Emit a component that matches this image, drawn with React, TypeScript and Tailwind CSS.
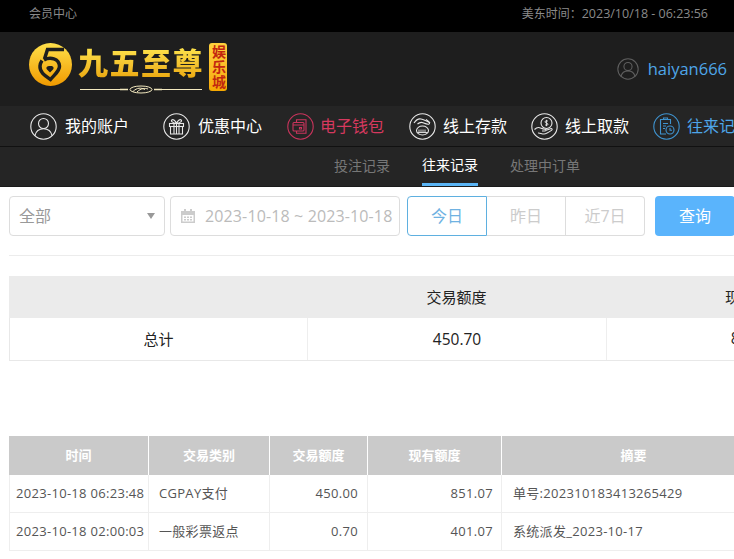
import type { ReactNode } from 'react';

const font = { fontFamily: '"Open Sans", "Noto Sans CJK SC", sans-serif' };

const Ring = ({ children, className }: { children: ReactNode; className: string }) => (
  <svg viewBox="0 0 27 27" fill="none" stroke="currentColor" strokeWidth="1.1" className={className}>
    <circle cx="13.5" cy="13.5" r="12.7" />
    {children}
  </svg>
);

const icons = {
  user: (
    <>
      <circle cx="13.5" cy="10.5" r="5" />
      <path d="M4.8 22.8c1.2-4.9 4.6-7 8.7-7s7.500 2.100 8.700 7" />
    </>
  ),
  gift: (
    <>
      <rect x="6.500" y="10.500" width="14" height="3" />
      <path d="M7.500 13.500V21h12v-7.500M11 10.500V21M13.500 10.500V21M16 10.500V21" />
      <path d="M13.500 10.500c-1-3-3.500-4.500-4.700-3.500s.7 3 4.700 3.500c1-3 3.500-4.500 4.700-3.500s-.7 3-4.700 3.500" />
    </>
  ),
  wallet: (
    <>
      <path d="M9.500 9V6.800h9.500v13.400H9.500V18" />
      <rect x="6" y="9.500" width="11" height="8.500" rx="1" />
      <path d="M6 12h11M12.500 14.500h2v1.500h-2z" />
    </>
  ),
  deposit: (
    <>
      <path d="M5 10c2-3 4.500-4.500 7-4 2 .4 5 2 7.500 3 1 .4 1.500 1.500.5 2-1.500.7-4-.5-6-1.300-2-.8-4 0-5.500 1.300" />
      <path d="M17 6.500c1.500 1 3 2 4 3.500" />
      <ellipse cx="13.500" cy="17.500" rx="6" ry="4.500" />
      <path d="M10 19.500v-3M12 19.500v-3M14 19.500v-3M16 19.500v-3M8.500 19.500h10" strokeWidth="0.9" />
    </>
  ),
  withdraw: (
    <>
      <circle cx="15.500" cy="10" r="5.500" />
      <path d="M15.500 6.800v6.400M17 8.300c-.7-.8-3-.8-3 .6 0 1.500 3 .8 3 2.300 0 1.300-2.300 1.300-3 .5" strokeWidth="0.9" />
      <path d="M3.500 16.500c2-2 4-2.500 6-1.500 1.500.7 3 1.200 4.500 1.200 1.500 0 1.500 1.800 0 1.800h-3M14.500 17.500l5-1.800c1.500-.5 2.300.8 1 1.700-2.500 1.800-5 3.600-7.500 3.600-2.500 0-4-1.200-6-1" />
    </>
  ),
  record: (
    <>
      <path d="M17.500 11V6.500H7.500v14.500h5.500" />
      <path d="M10.500 6.500V5h4v1.500M10 10.500h5M10 13h3M10 15.500h2" />
      <circle cx="17" cy="17" r="4" />
      <path d="M17 15v2.300h2" />
    </>
  ),
};

const navItems = [
  { label: '我的账户', icon: icons.user, text: 'text-white', ring: 'text-[#e8e8e8]', box: 'gap-[8px] mr-[34px]' },
  { label: '优惠中心', icon: icons.gift, text: 'text-white', ring: 'text-[#e8e8e8]', box: 'gap-[8px] mr-[25px]' },
  { label: '电子钱包', icon: icons.wallet, text: 'text-[#d6395f]', ring: 'text-[#c9345c]', box: 'gap-[6px] mr-[25px]' },
  { label: '线上存款', icon: icons.deposit, text: 'text-white', ring: 'text-[#e8e8e8]', box: 'gap-[7px] mr-[24px]' },
  { label: '线上取款', icon: icons.withdraw, text: 'text-white', ring: 'text-[#e8e8e8]', box: 'gap-[7px] mr-[24px]' },
  { label: '往来记录', icon: icons.record, text: 'text-[#4ea6e8]', ring: 'text-[#3f93cf]', box: 'gap-[7px]' },
];

const rows = [
  ['2023-10-18 06:23:48', 'CGPAY支付', '450.00', '851.07', '单号:202310183413265429'],
  ['2023-10-18 02:00:03', '一般彩票返点', '0.70', '401.07', '系统派发_2023-10-17'],
];

const Logo = () => (
  <div className="flex items-start">
    <svg viewBox="0 0 43 43" className="w-[43px] h-[43px] shrink-0">
      <defs>
        <linearGradient id="coin" x1="0" y1="0" x2="0" y2="1">
          <stop offset="0" stopColor="#ffe04a" />
          <stop offset="1" stopColor="#f09a00" />
        </linearGradient>
      </defs>
      <circle cx="21.500" cy="21.500" r="21.500" fill="url(#coin)" />
      <path d="M35 6.500H18.500l-3 9.500" stroke="#1e1e1e" strokeWidth="3.500" fill="none" />
      <path d="M15 17c6-3.500 15-1.500 15.500 6 .3 5-5 8.500-9 13.500-5-3.500-11-7-10.500-13.500.2-2 1-4 2-5.500" stroke="#1e1e1e" strokeWidth="3.500" fill="none" />
      <path d="M21 23c3-.5 4.500 1.500 3 3.500l-3 3-3-3c-1.500-2 0-3.500 3-3.500z" fill="#1e1e1e" />
    </svg>
    <div className="ml-[6px] w-[126px] flex flex-col">
      <span className="mt-[2px] text-[30px] leading-[36px] font-black tracking-[1.500px] whitespace-nowrap bg-gradient-to-b from-[#ffe84f] to-[#e9a400] bg-clip-text text-transparent">
        九五至尊
      </span>
      <svg viewBox="0 0 126 9" className="mt-[4px] w-[126px] h-[9px]" fill="none" stroke="#f3e9bf" strokeWidth="1">
        <path d="M2 4.500h40M84 4.500h40" />
        <path d="M42 4.500h8M76 4.500h8" strokeWidth="1.600" />
        <ellipse cx="63" cy="4.500" rx="11" ry="3.500" />
        <path d="M55 6.500c4-4 8-4 12-2M59 7c4-4 8-4 11-3" />
      </svg>
    </div>
    <div className="ml-[5px] w-[18px] h-[48px] rounded-[3px] bg-gradient-to-b from-[#ffd23c] to-[#f5a800] flex items-center justify-center text-[#c2260f] text-[14px] leading-[18px] tracking-[1px] font-bold [writing-mode:vertical-rl]">
      娱乐城
    </div>
  </div>
);

export default function App() {
  return (
    <div className="w-[734px] h-[559px] overflow-hidden bg-white" style={font}>
      <div className="h-[32px] bg-black pl-[29px] pr-[26px] pb-[4px] flex items-center justify-between text-[12px] text-[#8a8a8a]">
        <span>会员中心</span>
        <span>
          美东时间：<span className="text-[12.5px]">2023/10/18 - 06:23:56</span>
        </span>
      </div>

      <div className="h-[74px] bg-[#1e1e1e] pl-[29px] pr-[7px] flex items-start justify-between">
        <div className="pt-[11px]">
          <Logo />
        </div>
        <div className="pt-[26px] flex items-center gap-[9px]">
          <svg viewBox="0 0 27 27" fill="none" stroke="#5f5f5f" strokeWidth="1.300" className="w-[22px] h-[22px]">
            <circle cx="13.500" cy="13.500" r="12.500" />
            <circle cx="13.500" cy="10.500" r="5" />
            <path d="M4.800 22.800c1.200-4.900 4.600-7 8.700-7s7.500 2.100 8.700 7" />
          </svg>
          <span className="text-[16.5px] leading-[22px] text-[#4ea6e8]">haiyan666</span>
        </div>
      </div>

      <div className="h-[40px] bg-[#252525] border-b border-[#111] box-content pl-[30px] flex items-center whitespace-nowrap">
        {navItems.map((item) => (
          <div key={item.label} className={`flex items-center shrink-0 ${item.box}`}>
            <Ring className={`w-[27px] h-[27px] ${item.ring}`}>{item.icon}</Ring>
            <span className={`text-[16px] leading-[24px] ${item.text}`}>{item.label}</span>
          </div>
        ))}
      </div>

      <div className="h-[40px] bg-[#252525] border-b border-[#1a1a1a] box-border flex gap-[32px] pl-[334px] text-[14px] text-[#777]">
        <span className="leading-[38px]">投注记录</span>
        <span className="leading-[36px] h-[39px] text-white border-b-[3px] border-[#5ab4f5]">往来记录</span>
        <span className="leading-[38px]">处理中订单</span>
      </div>

      <div className="px-[9px] w-[900px]">
        <div className="mt-[9px] h-[40px] flex text-[16px]">
          <div className="w-[156px] border border-[#ddd] rounded-[4px] pl-[9px] pr-[9px] flex items-center justify-between text-[#999]">
            <span>全部</span>
            <span className="w-0 h-0 border-x-[4px] border-x-transparent border-t-[6px] border-t-[#999]"></span>
          </div>
          <div className="ml-[5px] w-[230px] border border-[#ddd] rounded-[4px] pl-[9px] flex items-center gap-[9px] text-[#bbb] whitespace-nowrap">
            <svg viewBox="0 0 16 16" className="w-[16px] h-[16px]" fill="#ccc">
              <path d="M1 3h3V1h2v2h4V1h2v2h3v12H1zM2.500 7v6.500h11V7z" />
              <path d="M4 8.500h2v1.500H4zM7 8.500h2v1.500H7zM10 8.500h2v1.500h-2zM4 11h2v1.500H4zM7 11h2v1.500H7zM10 11h2v1.500h-2z" />
            </svg>
            <span className="tracking-[0.13px]">2023-10-18 ~ 2023-10-18</span>
          </div>
          <div className="ml-[7px] flex text-[#ccc]">
            <div className="w-[80px] border border-[#5fb0e0] rounded-l-[4px] flex items-center justify-center text-[#6fb2e2]">今日</div>
            <div className="w-[79px] border-y border-r border-[#ddd] flex items-center justify-center">昨日</div>
            <div className="w-[79px] border-y border-r border-[#ddd] rounded-r-[4px] flex items-center justify-center">近7日</div>
          </div>
          <div className="ml-[10px] w-[80px] bg-[#5ab4fc] rounded-[4px] flex items-center justify-center text-white">查询</div>
        </div>

        <div className="mt-[19px] w-[890px] h-px bg-[#ececec]"></div>

        <div className="mt-[20px] w-[895px] text-[15px] text-[#222]">
          <div className="h-[42px] bg-[#ebebeb] grid grid-cols-[298px_299px_298px] items-center text-center">
            <span></span>
            <span>交易额度</span>
            <span>现有额度</span>
          </div>
          <div className="h-[43px] border-x border-b border-[#e8e8e8] grid grid-cols-[298px_299px_296px] items-center text-center">
            <span className="leading-[42px] border-r border-[#eee]">总计</span>
            <span className="leading-[42px] border-r border-[#eee] text-[15.5px]">450.70</span>
            <span className="text-[15.5px]">851.07</span>
          </div>
        </div>

        <table className="mt-[75px] w-[756px] table-fixed border-separate border-spacing-0 text-[13px] tracking-[0.3px] text-[#555]">
          <colgroup>
            <col className="w-[139px]" />
            <col className="w-[121px]" />
            <col className="w-[98px]" />
            <col className="w-[134px]" />
            <col className="w-[264px]" />
          </colgroup>
          <thead>
            <tr className="h-[39px] bg-[#cacaca] text-white text-[13px] tracking-normal">
              {['时间', '交易类别', '交易额度', '现有额度', '摘要'].map((head) => (
                <th key={head} className="font-bold border-l border-white first:border-l-0 p-0">{head}</th>
              ))}
            </tr>
          </thead>
          <tbody>
            {rows.map((row) => (
              <tr key={row[0]} className="h-[38px]">
                <td className="pl-[6px] whitespace-nowrap border-l border-b border-[#eee]">{row[0]}</td>
                <td className="pl-[10px] border-l border-b border-[#eee]">{row[1]}</td>
                <td className="pr-[9px] text-right border-l border-b border-[#eee]">{row[2]}</td>
                <td className="pr-[8px] text-right border-l border-b border-[#eee]">{row[3]}</td>
                <td className="pl-[11px] border-l border-b border-[#eee]">{row[4]}</td>
              </tr>
            ))}
          </tbody>
        </table>
      </div>
    </div>
  );
}
